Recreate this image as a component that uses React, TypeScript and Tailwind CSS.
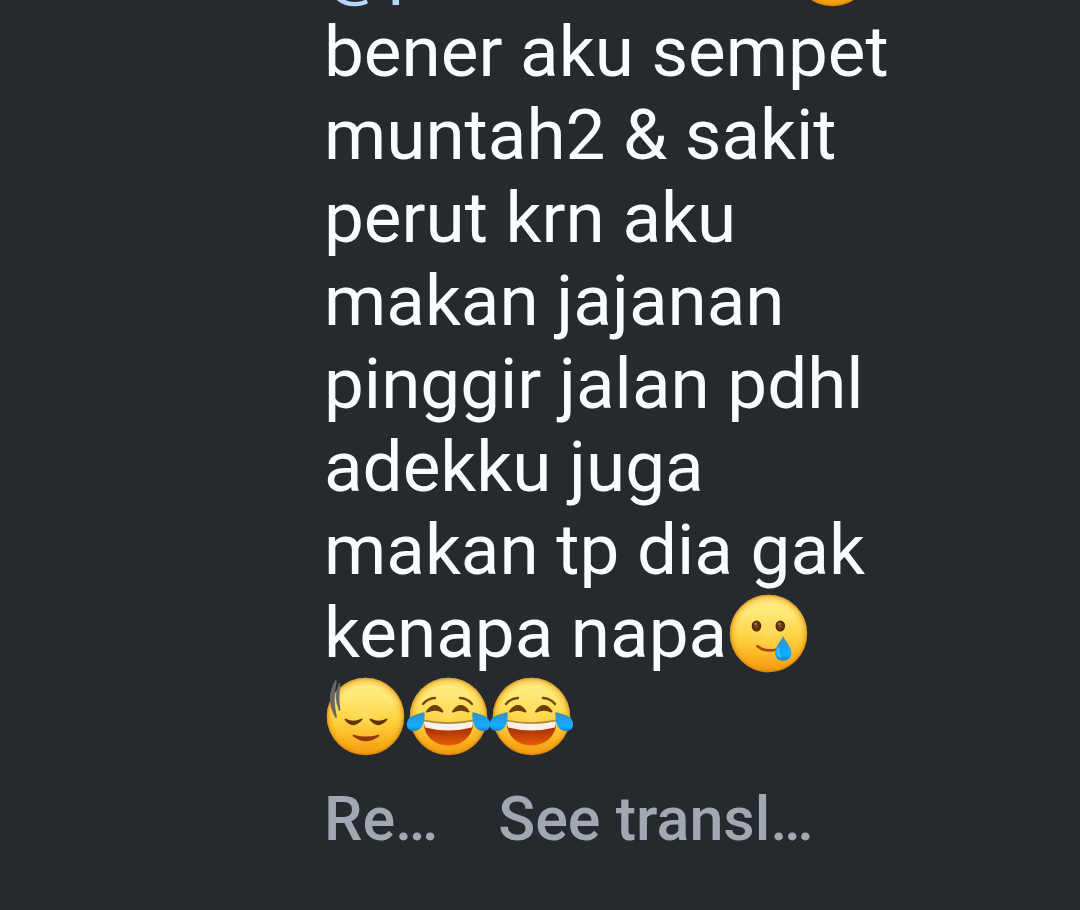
import React from 'react';

const lines = [
  'bener aku sempet',
  'muntah2 & sakit',
  'perut krn aku',
  'makan jajanan',
  'pinggir jalan pdhl',
  'adekku juga',
  'makan tp dia gak',
];

// Gradients shared by every emoji on the page
function EmojiDefs() {
  return (
    <svg className="absolute h-0 w-0" aria-hidden="true">
      <defs>
        <linearGradient id="face" x1="0" y1="0" x2="0" y2="1">
          <stop offset="0" stopColor="#fdeb84" />
          <stop offset="0.25" stopColor="#fee978" />
          <stop offset="0.5" stopColor="#fed748" />
          <stop offset="0.75" stopColor="#fcbb28" />
          <stop offset="1" stopColor="#f3950c" />
        </linearGradient>
        <radialGradient id="rim" cx="0.5" cy="0.5" r="0.5">
          <stop offset="0" stopColor="#fff0a0" stopOpacity="0.25" />
          <stop offset="0.78" stopColor="#fbb81c" stopOpacity="0" />
          <stop offset="0.92" stopColor="#f0a010" stopOpacity="0.35" />
          <stop offset="1" stopColor="#c87808" stopOpacity="0.75" />
        </radialGradient>
        <linearGradient id="tear" x1="0" y1="0" x2="0" y2="1">
          <stop offset="0" stopColor="#3a8fb0" />
          <stop offset="0.4" stopColor="#1f9fea" />
          <stop offset="0.75" stopColor="#16adff" />
          <stop offset="1" stopColor="#0a80d8" />
        </linearGradient>
        <linearGradient id="mouth" x1="0" y1="0" x2="0" y2="1">
          <stop offset="0" stopColor="#8f2c08" />
          <stop offset="0.5" stopColor="#bb3c06" />
          <stop offset="1" stopColor="#e86008" />
        </linearGradient>
        <radialGradient id="eye">
          <stop offset="0" stopColor="#7a4a1c" />
          <stop offset="1" stopColor="#4a2508" />
        </radialGradient>
      </defs>
    </svg>
  );
}

function Emoji({ label, children }: { label: string; children?: React.ReactNode }) {
  return (
    <svg
      role="img"
      aria-label={label}
      viewBox="0 0 83 83"
      className="h-[83px] w-[83px] shrink-0 overflow-visible"
      fill="none"
      strokeLinecap="round"
      strokeLinejoin="round"
    >
      <circle cx="41.5" cy="42.5" r="38.7" fill="url(#face)" />
      <circle cx="41.5" cy="42.5" r="38.7" fill="url(#rim)" />
      {children}
    </svg>
  );
}

function SmilingTear() {
  return (
    <Emoji label="Smiling face with tear">
      <ellipse cx="29.5" cy="35" rx="4.8" ry="5.6" fill="url(#eye)" />
      <ellipse cx="53.3" cy="35" rx="4.8" ry="5.6" fill="url(#eye)" />
      <circle cx="28.5" cy="32.8" r="1.3" fill="#a67c50" />
      <circle cx="52.3" cy="32.8" r="1.3" fill="#a67c50" />
      <path d="M30.5 55.2Q38 61.5 50 58.5" stroke="#a64b08" strokeWidth="2.8" />
      <path
        d="M56 45C58.5 50 64.3 56.5 64.3 62C64.3 67 60.7 69.7 56.3 69.7C51.5 69.7 48 66.7 48 61.5C48 56 54 50 56 45Z"
        fill="url(#tear)"
      />
      <path d="M51.5 58Q50 63.5 53.5 66" stroke="#67c8f5" strokeWidth="2" opacity="0.6" />
    </Emoji>
  );
}

function Melancholy() {
  return (
    <Emoji label="Pensive face with gloom lines">
      <path d="M21.5 45.5Q29 55 37.5 45.5Q29 50 21.5 45.5Z" fill="#5d3408" stroke="#5d3408" strokeWidth="1.8" />
      <path d="M46.5 45.5Q54 55 62.5 45.5Q55 50 46.5 45.5Z" fill="#5d3408" stroke="#5d3408" strokeWidth="1.8" />
      <path d="M29.5 61.5Q42 71 54.5 61.5Q42 65.5 29.5 61.5Z" fill="#93380a" stroke="#93380a" strokeWidth="1.8" />
      <path d="M12 7Q1.5 24 12 43Q7.5 24 12 7Z" fill="#66676a" stroke="#66676a" strokeWidth="1.8" />
      <path d="M15.5 10Q10 22 15.5 36Q13.5 22 15.5 10Z" fill="#66676a" stroke="#66676a" strokeWidth="1.8" />
    </Emoji>
  );
}

function TearsOfJoy() {
  return (
    <Emoji label="Face with tears of joy">
      <path d="M16 30Q20.5 24.5 28 24" stroke="#76480f" strokeWidth="2.4" />
      <path d="M65 30Q60.5 24.5 53 24" stroke="#76480f" strokeWidth="2.4" />
      <path d="M20 37.5Q28 26.5 35.5 37.5Q28 34 20 37.5Z" fill="#6d3d0a" stroke="#6d3d0a" strokeWidth="2" />
      <path d="M46 37.5Q54 26.5 61.5 37.5Q54 34 46 37.5Z" fill="#6d3d0a" stroke="#6d3d0a" strokeWidth="2" />
      <path
        d="M17 47Q41.500 52 66 47C67 61 56 71.5 41.5 71.5C27 71.5 16 61 17 47Z"
        fill="url(#mouth)"
      />
      <path d="M17 47Q41.5 52 66 47Q66 51 64.8 53.500Q41.5 59.500 18.2 53.5Q17 51 17 47Z" fill="#fbf1e6" />
      <path d="M17 46.5Q41.5 51.500 66 46.5" stroke="#a58a45" strokeWidth="1.4" />
      <path d="M17.500 38C18.500 48 15 57 7 57C1 57 -1.500 52 0.500 47C3 40.500 11 40.500 17.500 38Z" fill="url(#tear)" />
      <path d="M65.5 38C64.5 48 68 57 76 57C82 57 84.5 52 82.5 47C80 40.5 72 40.5 65.5 38Z" fill="url(#tear)" />
    </Emoji>
  );
}

export default function App() {
  return (
    <div className="min-h-screen overflow-hidden bg-[#26292e] pl-[324px] font-['Roboto',sans-serif]">
      <EmojiDefs />
      <div className="-mt-[75px] text-[71px] leading-[83px] whitespace-nowrap text-[#f9fbfc]">
        <div className="flex pb-0.5">
          <a href="#profile" className="w-[467px] text-[#b4d7fb]">
            @p
          </a>
          <Emoji label="Smiling face" />
        </div>
        {lines.map((line) => (
          <p key={line}>{line}</p>
        ))}
        <div className="flex">
          <p>kenapa napa</p>
          <SmilingTear />
        </div>
        <div className="flex">
          <Melancholy />
          <TearsOfJoy />
          <TearsOfJoy />
        </div>
      </div>
      <div className="mt-6 flex gap-[60px] text-[61px] leading-[76px] font-medium whitespace-nowrap text-[#a1a8b2]">
        <button type="button">Re…</button>
        <button type="button">See transl…</button>
      </div>
    </div>
  );
}
